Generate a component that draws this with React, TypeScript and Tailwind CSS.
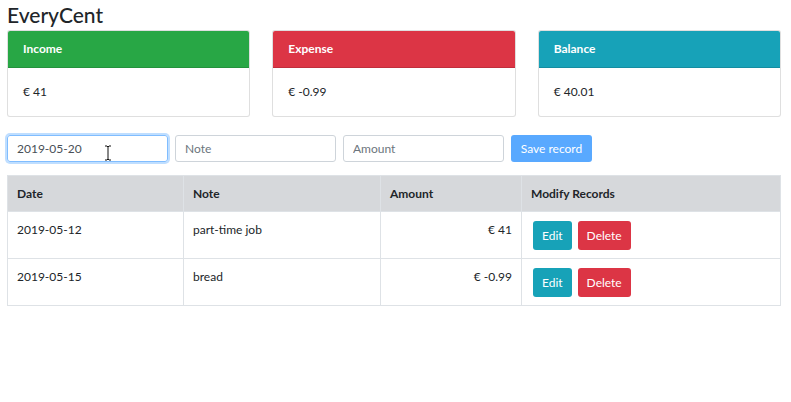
import { useState } from 'react';

type Rec = { date: string; note: string; amount: number };

const RECORDS: Rec[] = [
  { date: '2019-05-12', note: 'part-time job', amount: 41 },
  { date: '2019-05-15', note: 'bread', amount: -0.99 },
];

function SummaryCard({ title, value, head }: { title: string; value: string; head: string }) {
  return (
    <div className="flex-1 rounded-[3px] border border-black/[0.125] overflow-hidden bg-white">
      <div className={`${head} px-[15px] py-[9px] text-[12px] leading-[18px] font-bold text-white border-b border-black/[0.125]`}>
        {title}
      </div>
      <div className="px-[15px] py-[15px] text-[12px] leading-[18px] text-[#212529]">{value}</div>
    </div>
  );
}

export default function App() {
  const [date, setDate] = useState('2019-05-20');
  const [note, setNote] = useState('');
  const [amount, setAmount] = useState('');

  const income = RECORDS.filter(r => r.amount > 0).reduce((s, r) => s + r.amount, 0);
  const expense = RECORDS.filter(r => r.amount < 0).reduce((s, r) => s + r.amount, 0);
  const balance = Math.round((income + expense) * 100) / 100;

  return (
    <div className="min-h-screen bg-white pl-[7px] pr-[10px] text-[#212529]" style={{ fontFamily: 'Lato, "Noto Sans", sans-serif' }}>
      <h1 className="text-[21px] leading-[25px] font-medium pt-[2px] mb-[3px]">EveryCent</h1>

      {/* summary */}
      <div className="flex gap-[22px]">
        <SummaryCard title="Income" value={`€ ${income}`} head="bg-[#28a745]" />
        <SummaryCard title="Expense" value={`€ ${expense}`} head="bg-[#dc3545]" />
        <SummaryCard title="Balance" value={`€ ${balance}`} head="bg-[#17a2b8]" />
      </div>

      {/* form */}
      <div className="flex items-center gap-[7px] mt-[18px]">
        <div className="relative">
          <input
            value={date}
            onChange={e => setDate(e.target.value)}
            className="w-[161px] h-[27px] px-[9px] text-[12px] rounded-[3px] border border-[#80bdff] outline-none shadow-[0_0_0_2px_rgba(0,123,255,0.25)] text-[#495057]"
          />
          <svg className="absolute left-[97px] top-[10px] pointer-events-none" width="8" height="16" viewBox="0 0 8 16">
            <path d="M1 1h2l1 1 1-1h2M4 2v12M1 15h2l1-1 1 1h2" stroke="#111" strokeWidth="1" fill="none" />
          </svg>
        </div>
        <input
          value={note}
          onChange={e => setNote(e.target.value)}
          placeholder="Note"
          className="w-[161px] h-[27px] px-[9px] text-[12px] rounded-[3px] border border-[#ced4da] outline-none placeholder:text-[#6c757d]"
        />
        <input
          value={amount}
          onChange={e => setAmount(e.target.value)}
          placeholder="Amount"
          className="w-[161px] h-[27px] px-[9px] text-[12px] rounded-[3px] border border-[#ced4da] outline-none placeholder:text-[#6c757d]"
        />
        <button
          disabled
          className="h-[27px] px-[9px] text-[12px] text-white rounded-[3px] bg-[#59a9ff] w-[81px]"
        >
          Save record
        </button>
      </div>

      {/* table */}
      <table className="w-full mt-[13px] border-collapse text-[12px] leading-[18px]">
        <thead>
          <tr className="bg-[#d6d8db]">
            <th className="w-[176px] text-left font-bold px-[9px] pt-[9px] pb-[8px] border border-[#dee2e6]">Date</th>
            <th className="w-[197px] text-left font-bold px-[9px] pt-[9px] pb-[8px] border border-[#dee2e6]">Note</th>
            <th className="w-[141px] text-left font-bold px-[9px] pt-[9px] pb-[8px] border border-[#dee2e6]">Amount</th>
            <th className="text-left font-bold px-[9px] pt-[9px] pb-[8px] border border-[#dee2e6]">Modify Records</th>
          </tr>
        </thead>
        <tbody>
          {RECORDS.map(r => (
            <tr key={r.date}>
              <td className="align-top px-[9px] pt-[9px] pb-[8px] border border-[#dee2e6]">{r.date}</td>
              <td className="align-top px-[9px] pt-[9px] pb-[8px] border border-[#dee2e6]">{r.note}</td>
              <td className="align-top text-right px-[9px] pt-[9px] pb-[8px] border border-[#dee2e6]">€ {r.amount}</td>
              <td className="align-top px-[9px] pt-[9px] pb-[8px] border border-[#dee2e6]">
                <div className="flex gap-[6px] pl-[2px]">
                  <button className="h-[29px] px-[9px] rounded-[3px] text-white bg-[#17a2b8]">Edit</button>
                  <button className="h-[29px] px-[9px] rounded-[3px] text-white bg-[#dc3545]">Delete</button>
                </div>
              </td>
            </tr>
          ))}
        </tbody>
      </table>
    </div>
  );
}
